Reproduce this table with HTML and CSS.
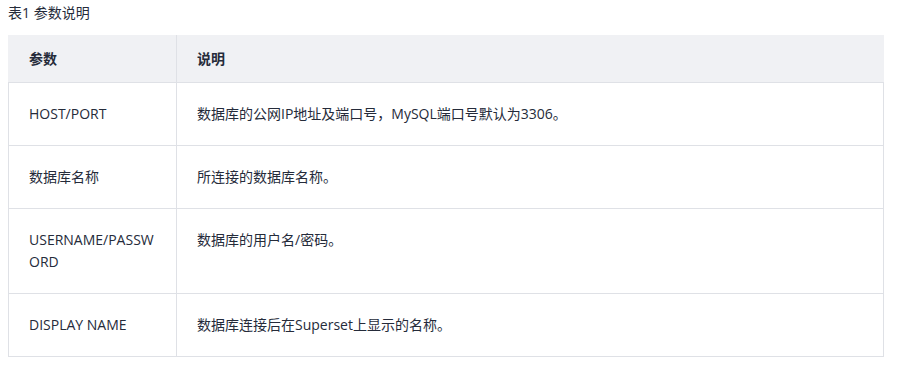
FILE: index.html
```html
<!DOCTYPE html>
<html lang="zh-CN">
<head>
    <meta charset="UTF-8">
    <meta name="viewport" content="width=device-width, initial-scale=1.0">
    <title>参数说明</title>
    <link rel="stylesheet" href="styles.css">
</head>
<body>
    <div class="table-wrap">
        <p class="caption">表1 参数说明</p>
        <table class="param-table">
            <colgroup>
                <col class="col-name">
                <col>
            </colgroup>
            <thead>
                <tr>
                    <th>参数</th>
                    <th>说明</th>
                </tr>
            </thead>
            <tbody>
                <tr>
                    <td>HOST/PORT</td>
                    <td>数据库的公网IP地址及端口号，MySQL端口号默认为3306。</td>
                </tr>
                <tr>
                    <td>数据库名称</td>
                    <td>所连接的数据库名称。</td>
                </tr>
                <tr>
                    <td>USERNAME/PASSWORD</td>
                    <td>数据库的用户名/密码。</td>
                </tr>
                <tr>
                    <td>DISPLAY NAME</td>
                    <td>数据库连接后在Superset上显示的名称。</td>
                </tr>
            </tbody>
        </table>
    </div>
</body>
</html>
```

FILE: styles.css
```css
body {
    font-family: 'Open Sans', 'Noto Sans CJK SC', sans-serif;
    font-size: 14px;
    line-height: 22px;
    margin: 0;
    padding: 0 16px 0 8px;
    background-color: #fff;
    color: #252b3a;
}

.caption {
    margin: 0;
    padding-top: 3px;
    height: 32px;
    font-size: 14px;
    line-height: 20px;
}

.param-table {
    width: 876px;
    border-collapse: collapse;
    table-layout: fixed;
}

.col-name {
    width: 168px;
}

.param-table th,
.param-table td {
    border: 1px solid #dfe1e6;
    padding: 20px 20px;
    text-align: left;
    vertical-align: top;
    word-break: break-all;
}

.param-table th {
    background-color: #f0f1f4;
    padding: 12px 20px;
    font-weight: bold;
    border-top-color: #f0f1f4;
    border-left-color: #f0f1f4;
}

.param-table th + th {
    border-left-color: #dfe1e6;
    border-right-color: #f0f1f4;
}
```
